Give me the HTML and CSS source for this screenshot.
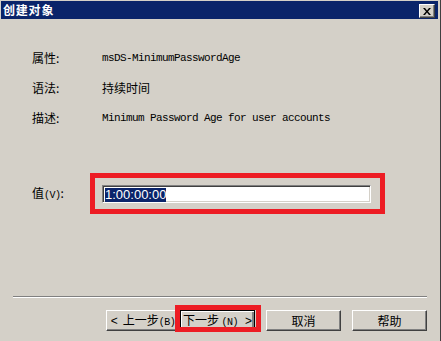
FILE: index.html
```html
<!DOCTYPE html>
<html lang="zh-CN">
<head>
  <meta charset="UTF-8">
  <title>创建对象</title>
  <link rel="stylesheet" href="styles.css">
</head>
<body>
  <div class="window">
    <div class="titlebar">
      <span class="title">创建对象</span>
      <button class="close">
        <svg width="8" height="7" viewBox="0 0 8 7"><path d="M0 0h2l2 2.5L6 0h2L5 3.5 8 7H6L4 4.5 2 7H0l3-3.5z" fill="#000"/></svg>
      </button>
    </div>

    <div class="content">
      <div class="props">
        <div class="prop-label">属性:</div>
        <div class="prop-value mono">msDS-MinimumPasswordAge</div>
        <div class="prop-label">语法:</div>
        <div class="prop-value">持续时间</div>
        <div class="prop-label">描述:</div>
        <div class="prop-value mono">Minimum Password Age for user accounts</div>
      </div>

      <div class="value-row">
        <label class="value-label">值<span class="key">(V)</span>:</label>
        <div class="field">
          <span class="selected">1:00:00:00</span>
          <span class="mark mark-field"></span>
        </div>
      </div>

      <div class="separator"></div>

      <div class="buttons">
        <button class="btn btn-back"><span class="arrow">&lt;</span>上一步<span class="key">(B)</span></button>
        <button class="btn btn-next">下一步 <span class="key">(N)</span><span class="arrow arrow-right">&gt;</span><span class="mark mark-btn"></span></button>
        <button class="btn btn-cancel">取消</button>
        <button class="btn btn-help">帮助</button>
      </div>
    </div>
  </div>
</body>
</html>
```

FILE: styles.css
```css
* {
  margin: 0;
  padding: 0;
  box-sizing: border-box;
}

body {
  background: #d4d0c8;
  font-family: "Noto Sans CJK SC", "Liberation Sans", sans-serif;
  font-size: 12px;
  color: #000;
}

.window {
  width: 441px;
  height: 341px;
  padding: 1px 2px 0 1px;
  border-right: 1px solid #404040;
  background: #d4d0c8;
  display: flex;
  flex-direction: column;
}

.titlebar {
  height: 18px;
  background: #0a246a;
  display: flex;
  align-items: flex-start;
  justify-content: space-between;
}

.title {
  color: #fff;
  font-weight: bold;
  font-size: 12px;
  letter-spacing: 0.8px;
  line-height: 18px;
  padding-left: 2px;
}

.close {
  width: 16px;
  height: 14px;
  margin: 3px 3px 0 0;
  background: #d4d0c8;
  border: 1px solid;
  border-color: #fff #404040 #404040 #fff;
  box-shadow: inset -1px -1px 0 #808080;
  display: flex;
  align-items: center;
  justify-content: center;
}

.content {
  flex: 1;
  padding: 31px 0 0 12px;
}

.props {
  display: grid;
  grid-template-columns: 70px 1fr;
  row-gap: 14px;
  padding-left: 19px;
  line-height: 16px;
}

.mono {
  font-family: "Liberation Mono", monospace;
  font-size: 11px;
  letter-spacing: -0.6px;
}

.key {
  font-family: "Liberation Mono", monospace;
  font-size: 10px;
  letter-spacing: -0.5px;
}

.value-row {
  display: flex;
  align-items: center;
  margin-top: 59px;
  padding-left: 19px;
  height: 18px;
}

.value-label {
  width: 70px;
  line-height: 18px;
}

.field {
  position: relative;
  width: 269px;
  height: 18px;
  background: #fff;
  border: 1px solid;
  border-color: #808080 #fff #fff #808080;
  box-shadow: inset 1px 1px 0 #404040, inset -1px -1px 0 #d4d0c8;
  padding: 1px 0 0 2px;
  display: flex;
  align-items: center;
}

.selected {
  background: #0a246a;
  color: #fff;
  font-family: "Liberation Sans", sans-serif;
  font-size: 13px;
  line-height: 14px;
}

.mark {
  position: absolute;
  border: 5px solid #ed1c24;
  pointer-events: none;
}

.mark-field {
  left: -13px;
  top: -13px;
  width: 295px;
  height: 41px;
}

.separator {
  width: 414px;
  margin-top: 93px;
  border-top: 1px solid #808080;
  border-bottom: 1px solid #fff;
}

.buttons {
  display: flex;
  margin-top: 12px;
  padding-left: 93px;
}

.btn {
  position: relative;
  width: 75px;
  height: 21px;
  background: #d4d0c8;
  font-family: "Noto Sans CJK SC", "Liberation Sans", sans-serif;
  font-size: 12px;
  line-height: 17px;
  border: 1px solid;
  border-color: #fff #404040 #404040 #fff;
  box-shadow: inset -1px -1px 0 #808080;
}

.arrow {
  font-family: "Liberation Sans", sans-serif;
  margin-right: 5px;
}

.arrow-right {
  margin: 0 0 0 7px;
}

.btn-back {
  width: 74px;
}

.btn-next {
  border-color: #000;
  box-shadow: inset 1px 1px 0 #fff, inset -2px -2px 0 #808080;
}

.btn-cancel {
  margin-left: 11px;
}

.btn-help {
  margin-left: 11px;
}

.mark-btn {
  left: -6px;
  top: -6px;
  width: 86px;
  height: 27px;
}
```
